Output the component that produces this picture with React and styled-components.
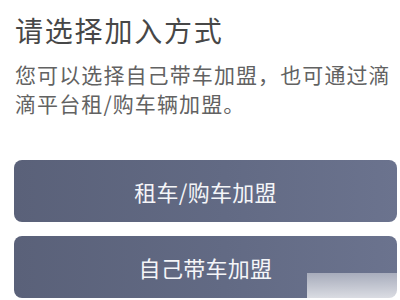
import React from "react";
import styled, { createGlobalStyle } from "styled-components";

const Global = createGlobalStyle`
  html, body { margin: 0; padding: 0; background: #ffffff; }
  body { font-family: "Noto Sans CJK SC", "Noto Sans", sans-serif; }
`;

const Page = styled.div`
  position: relative;
  width: 400px;
  height: 300px;
  overflow: hidden;
  box-sizing: border-box;
  padding: 10px 3px 0 14px;
  display: flex;
  flex-direction: column;
`;

const Title = styled.h1`
  margin: 0 0 0 1px;
  font-size: 28px;
  line-height: 40px;
  font-weight: 400;
  letter-spacing: 1.8px;
  color: #474747;
`;

const Desc = styled.p`
  margin: 10px 0 0 1px;
  font-size: 21px;
  line-height: 29px;
  letter-spacing: 1.1px;
  color: #626262;
`;

const Buttons = styled.div`
  margin-top: 42px;
  display: flex;
  flex-direction: column;
  gap: 14px;
`;

const Button = styled.button`
  height: 62px;
  border: none;
  border-radius: 8px;
  background: linear-gradient(90deg, #5a6179 0%, #626a84 55%, #6b738e 100%);
  color: #f4f5f8;
  font-family: "Noto Sans CJK SC", "Noto Sans", sans-serif;
  font-size: 22px;
  letter-spacing: 0.3px;
  display: flex;
  align-items: center;
  justify-content: center;
  padding: 0;
`;

const Watermark = styled.div`
  position: absolute;
  left: 307px;
  top: 273px;
  width: 93px;
  height: 27px;
  background: linear-gradient(180deg, rgba(255,255,255,0.42) 0%, rgba(255,255,255,0.78) 100%);
`;

export default function App() {
  return (
    <>
      <Global />
      <Page>
        <Title>请选择加入方式</Title>
        <Desc>您可以选择自己带车加盟，也可通过滴滴平台租/购车辆加盟。</Desc>
        <Buttons>
          <Button>租车/购车加盟</Button>
          <Button>自己带车加盟</Button>
        </Buttons>
        <Watermark />
      </Page>
    </>
  );
}
